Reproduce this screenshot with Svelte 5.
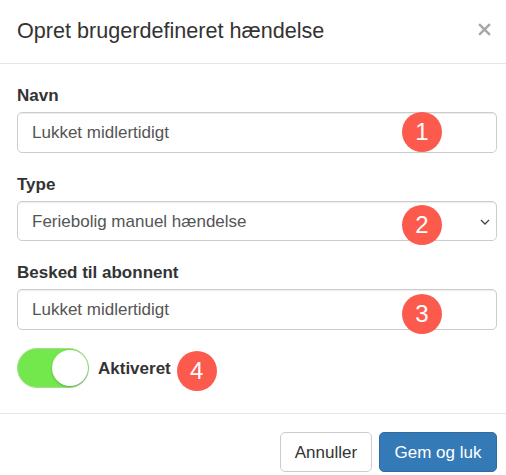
<script lang="ts">
    let name = $state('Lukket midlertidigt')
    let message = $state('Lukket midlertidigt')
    let type = $state('Feriebolig manuel hændelse')
    let enabled = $state(true)
</script>

<div class="modal">
    <header>
        <h4>Opret brugerdefineret hændelse</h4>
        <button class="close" aria-label="Luk">
            <svg viewBox="0 0 12 12" width="13" height="13">
                <path d="M1 1 L11 11 M11 1 L1 11" />
            </svg>
        </button>
    </header>

    <div class="body">
        <div class="group">
            <label for="navn">Navn</label>
            <div class="field">
                <input id="navn" bind:value={name} />
                <span class="badge">1</span>
            </div>
        </div>
        <div class="group">
            <label for="type">Type</label>
            <div class="field">
                <select id="type" bind:value={type}>
                    <option>Feriebolig manuel hændelse</option>
                </select>
                <svg class="chevron" viewBox="0 0 10 6" width="10" height="6">
                    <path d="M1 1 L5 5 L9 1" />
                </svg>
                <span class="badge two">2</span>
            </div>
        </div>
        <div class="group">
            <label for="besked">Besked til abonnent</label>
            <div class="field">
                <input id="besked" bind:value={message} />
                <span class="badge three">3</span>
            </div>
        </div>
        <div class="toggle-row">
            <button class="toggle" class:on={enabled} aria-label="Aktiveret" onclick={() => enabled = !enabled}>
                <span class="knob"></span>
            </button>
            <strong>Aktiveret</strong>
            <span class="badge inline">4</span>
        </div>
    </div>

    <footer>
        <button class="btn">Annuller</button>
        <button class="btn primary">Gem og luk</button>
    </footer>
</div>

<style>
    :global(body) {
        background: #fff;
    }
    .modal {
        width: 506px;
        height: 475px;
        overflow: hidden;
        font-family: "Liberation Sans", Arial, sans-serif;
        color: #333;
        font-size: 17px;
    }
    header {
        display: flex;
        align-items: center;
        justify-content: space-between;
        height: 63px;
        padding: 0 15px 0 17px;
        border-bottom: 1px solid #e5e5e5;
    }
    h4 {
        margin: 0 0 2px;
        font-size: 21.6px;
        font-weight: 400;
        line-height: 1;
    }
    .close {
        background: none;
        border: 0;
        padding: 0;
        margin-bottom: 4px;
        display: flex;
    }
    .close path {
        stroke: #a6a6a6;
        stroke-width: 2.2;
        fill: none;
    }
    .body {
        padding: 22px 9px 0 17px;
        height: 350px;
        box-sizing: border-box;
        border-bottom: 1px solid #e5e5e5;
    }
    .group {
        margin-bottom: 22px;
    }
    label {
        display: block;
        font-weight: 700;
        line-height: 20px;
        margin-bottom: 6px;
    }
    .field {
        position: relative;
        width: 480px;
    }
    input, select {
        display: block;
        width: 100%;
        height: 40.5px;
        box-sizing: border-box;
        padding: 1px 14px 0;
        font: inherit;
        color: #555;
        background: #fff;
        border: 1px solid #ccc;
        border-radius: 5px;
        box-shadow: inset 0 1px 1px rgba(0, 0, 0, 0.075);
        appearance: none;
        outline: none;
    }
    .chevron {
        position: absolute;
        right: 7px;
        top: 18px;
    }
    .chevron path {
        stroke: #444;
        stroke-width: 1.3;
        fill: none;
    }
    .badge {
        position: absolute;
        right: 55px;
        top: 0;
        width: 40px;
        height: 40px;
        border-radius: 50%;
        background: #fd5a4e;
        color: #fff;
        font-size: 24px;
        display: flex;
        align-items: center;
        justify-content: center;
    }
    .badge.two {
        top: 4px;
    }
    .badge.three {
        top: 5px;
    }
    .badge.inline {
        position: static;
        align-self: flex-start;
        margin: 3px 0 0 6px;
    }
    .toggle-row {
        display: flex;
        align-items: center;
        height: 40px;
        margin-top: -3.5px;
    }
    .toggle {
        position: relative;
        width: 72px;
        height: 40px;
        padding: 0;
        border: 1px solid #a5dd8c;
        border-radius: 20px;
        background: #dfdfdf;
        box-sizing: border-box;
    }
    .toggle.on {
        background: #72e84c;
    }
    .knob {
        position: absolute;
        right: 0;
        top: 1px;
        width: 36px;
        height: 36px;
        border-radius: 50%;
        background: #fff;
        box-shadow: 0 1px 2px rgba(0, 0, 0, 0.25);
    }
    strong {
        margin: 2px 0 0 9px;
        font-weight: 700;
    }
    footer {
        display: flex;
        justify-content: flex-end;
        gap: 7px;
        padding: 18px 9px 0 0;
    }
    .btn {
        height: 40px;
        box-sizing: border-box;
        padding: 1px 14px 0;
        font: inherit;
        color: #333;
        background: #fff;
        border: 1px solid #ccc;
        border-radius: 5px;
    }
    .btn.primary {
        padding: 1px 14.5px 0;
        color: #fff;
        background: #337ab7;
        border-color: #2e6da4;
    }
</style>
